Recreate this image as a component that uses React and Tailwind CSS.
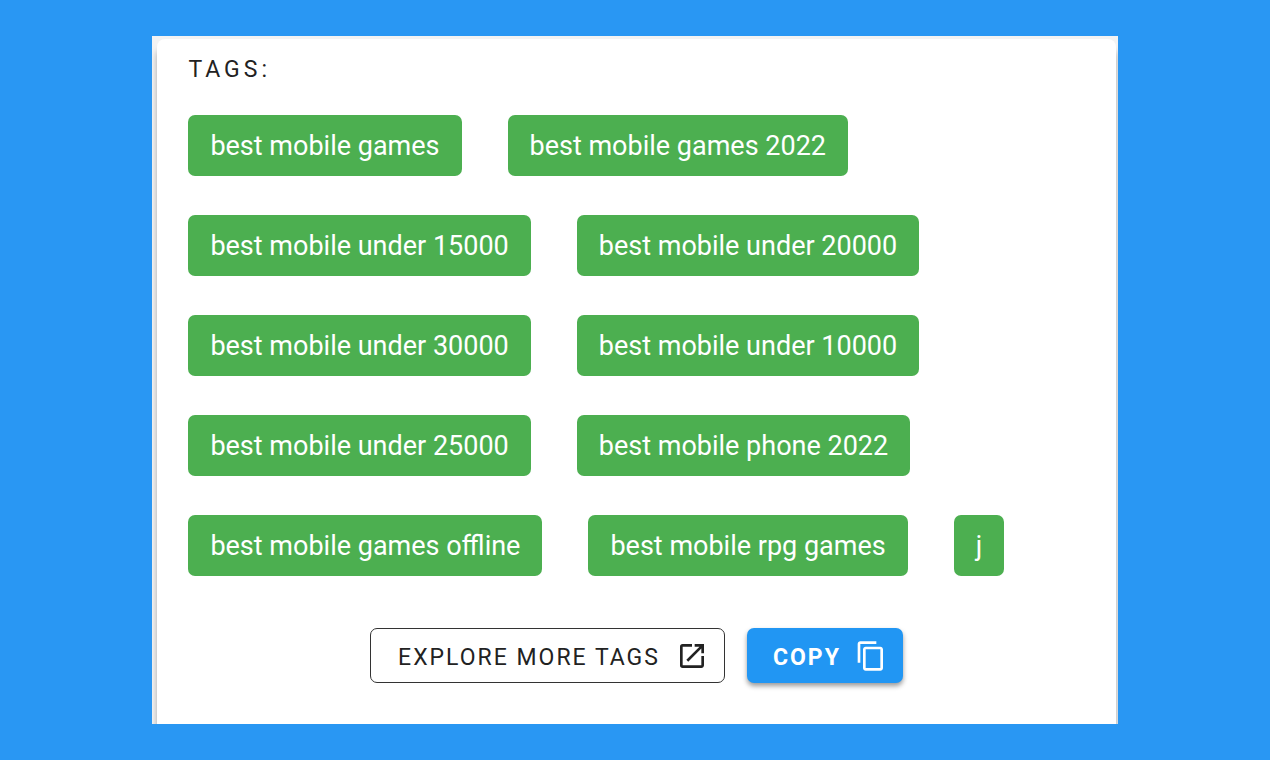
import React from 'react';
import { MdContentCopy, MdOpenInNew } from 'react-icons/md';

const TAGS = [
    'best mobile games',
    'best mobile games 2022',
    'best mobile under 15000',
    'best mobile under 20000',
    'best mobile under 30000',
    'best mobile under 10000',
    'best mobile under 25000',
    'best mobile phone 2022',
    'best mobile games offline',
    'best mobile rpg games',
    'j',
];

const Tag = ({ label }) => (
    <li className="rounded-[7px] bg-[#4caf50] px-[22px] pt-[11px] pb-[10px] text-[27px] leading-[40px] text-white">
        {label}
    </li>
);

const App = () => {
    return (
        <div className="min-h-screen bg-[#2997f3] px-[12%] py-9 font-[Roboto,sans-serif]">
            <main className="overflow-hidden bg-[#f3f3f3] pt-[3px] pr-[2px] pl-[5px]">
                <div className="rounded-t-lg bg-white px-[31px] pb-[41px] shadow-[0_10px_6px_rgba(0,0,0,0.32)]">
                    <h2 className="pt-4 text-[23px] leading-[30px] tracking-[4px] text-[#222]">TAGS:</h2>

                    {/* Tag list */}
                    <ul className="mt-[30px] flex flex-wrap gap-x-[46px] gap-y-[39px]">
                        {TAGS.map((tag) => (
                            <Tag key={tag} label={tag} />
                        ))}
                    </ul>

                    {/* Actions */}
                    <div className="mt-[52px] flex flex-wrap justify-center gap-[22px]">
                        <button
                            type="button"
                            className="flex h-[55px] items-center gap-4 rounded-[7px] border border-[#333] pr-4 pl-[27px] text-[23px] leading-8 tracking-[2px] text-[#222]"
                        >
                            <span className="pt-1">EXPLORE MORE TAGS</span>
                            <MdOpenInNew className="size-8" />
                        </button>
                        <button
                            type="button"
                            className="flex h-[55px] items-center gap-[14px] rounded-[7px] bg-[#2196f3] pr-4 pl-[26px] text-[23px] leading-8 font-bold tracking-[2px] text-white shadow-[0_3px_5px_rgba(0,0,0,0.4)]"
                        >
                            <span className="pt-1">COPY</span>
                            <MdContentCopy className="size-8" />
                        </button>
                    </div>
                </div>
            </main>
        </div>
    );
};

export default App;
